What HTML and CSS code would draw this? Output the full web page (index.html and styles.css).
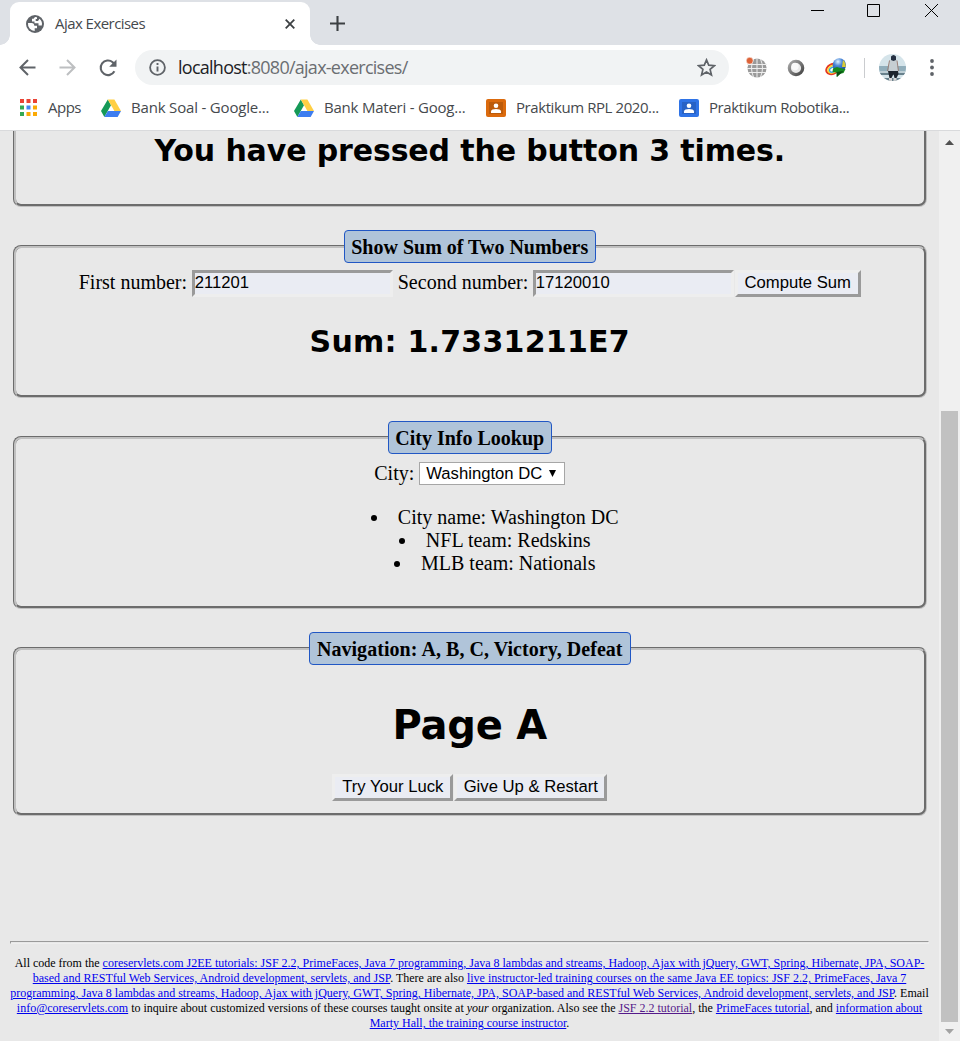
FILE: index.html
```html
<!DOCTYPE html>
<html lang="en">
<head>
<meta charset="utf-8">
<title>Ajax Exercises</title>
<link rel="stylesheet" href="styles.css">
</head>
<body>
<svg class="defs" aria-hidden="true">
  <symbol id="drive" viewBox="0 0 20 18"><path fill="#159957" d="M6.8 0.5 0 12l3.4 6L10 6.3z"/><path fill="#ffcf44" d="M6.8.5h6.6L20 12h-6.6z"/><path fill="#3d7df0" d="M6.8 12H20l-3.4 6H3.4z"/></symbol>
  <symbol id="person" viewBox="0 0 20 18"><path d="M3 3h14v12H3z" fill="#000" opacity=".14"/><circle cx="10" cy="6.800" r="2.300" fill="#fff"/><path fill="#fff" d="M5 14v-1.500C5 10.700 7.500 10 10 10s5 .7 5 2.500V14z"/></symbol>
</svg>
<header class="tabs">
  <div class="tab">
    <svg class="favicon" viewBox="0 0 18 18"><circle cx="9" cy="9" r="9" fill="#5f6368"/><path fill="#fff" d="M2 8h3.500c2 0 2.800 1.200 2.800 2.700H11v2.600H8.700v2.600A7 7 0 0 1 2 8zM9 2 7.600 3.800H6v2.700h2.500v1.700h4v2.300h3.300A7 7 0 0 0 13.500 3.700L12 6H9.700V3.900H11V2.200z"/></svg>
    <span class="tab-title">Ajax Exercises</span>
    <svg class="tab-close" viewBox="0 0 10 10"><path d="m.7.7 8.6 8.6M9.3.7.7 9.3" stroke="#3c4043" stroke-width="1.8"/></svg>
  </div>
  <svg class="new-tab" viewBox="0 0 15 15"><path d="M7.5 0v15M0 7.5h15" stroke="#3c4043" stroke-width="2.1"/></svg>
  <svg class="window-buttons" viewBox="0 0 128 14" fill="none" stroke="#000"><path d="M0 7.5h13M56.500 1.500h12v12h-12zM114 1l13 13M127 1l-13 13"/></svg>
</header>
<div class="toolbar">
  <svg class="back" viewBox="0 0 17 17" fill="none" stroke="#5f6368" stroke-width="2"><path d="M16.500 8.500H1.500M9 1 1.500 8.500 9 16"/></svg>
  <svg class="forward" viewBox="0 0 17 17" fill="none" stroke="#bdbfc1" stroke-width="2"><path d="M.5 8.500h15M8 1l7.500 7.500L8 16"/></svg>
  <svg class="reload" viewBox="0 0 18 18"><path d="M15.400 12.300A7.300 7.300 0 1 1 13.700 3.200L15 4.700" fill="none" stroke="#5f6368" stroke-width="2.100"/><path d="M17.500.5v7.300h-7.300z" fill="#5f6368"/></svg>
  <div class="address">
    <svg class="info" viewBox="0 0 17 17"><circle cx="8.500" cy="8.500" r="7.400" fill="none" stroke="#5f6368" stroke-width="1.800"/><path d="M8.500 7.500v5M8.500 4v2" stroke="#5f6368" stroke-width="1.900"/></svg>
    <span class="url"><b>localhost</b>:8080/ajax-exercises/</span>
    <svg class="star" viewBox="0 0 18 18"><path d="m9 1.800 2.100 5 5.400.5-4.100 3.500 1.300 5.300L9 13.300l-4.700 2.800 1.300-5.300-4.100-3.500 5.400-.5z" fill="none" stroke="#5f6368" stroke-width="1.600"/></svg>
  </div>
  <svg class="ext-globe" viewBox="0 0 21 21"><circle cx="11" cy="11" r="9.600" fill="#9a9a9a"/><path d="M1 7.500h20M1 11.500h20M2 15.500h18M11 1v20M7.500 2Q3.500 11 7.500 20M14.500 2q4 9 0 18" fill="none" stroke="#eee"/><circle cx="3.700" cy="3.700" r="3.400" fill="#dd6338" stroke="#fff" stroke-width=".5"/></svg>
  <svg class="ext-ring" viewBox="0 0 18 18"><defs><linearGradient id="ring" x2="1" y2="1"><stop stop-color="#aaa"/><stop offset="1" stop-color="#444"/></linearGradient></defs><circle cx="9" cy="9" r="6.700" fill="#e9e9e9" stroke="url(#ring)" stroke-width="3.200"/><circle cx="8" cy="7.500" r="3.700" fill="#fafafa"/></svg>
  <svg class="ext-idm" viewBox="0 0 21 19"><defs><radialGradient id="ball" cx=".4" cy=".25" r=".8"><stop stop-color="#dff3ff"/><stop offset=".4" stop-color="#4a86d8"/><stop offset="1" stop-color="#123f94"/></radialGradient></defs><g fill="none"><ellipse cx="7.500" cy="11" rx="6.500" ry="4.800" stroke="#e43a24" stroke-width="2" transform="rotate(-25 7.500 11)"/><ellipse cx="7.800" cy="11.200" rx="5" ry="3.500" stroke="#ffd92b" stroke-width="1.600" transform="rotate(-25 7.800 11.200)"/><ellipse cx="8" cy="11.500" rx="3.700" ry="2.300" stroke="#31a9e0" stroke-width="1.400" transform="rotate(-25 8 11.500)"/></g><circle cx="14.300" cy="7" r="6.700" fill="url(#ball)"/><path d="M18 2q3 3 2.700 7L17 9z" fill="#d8cb35"/><path d="M8 10.500 12 9l3 1 5.500 1-2 4-4 1-3 3 .3-4.500-4.300-.5z" fill="#178a20"/><path d="m11.500 14 7-1-6.500 6z" fill="#0b5013"/></svg>
  <i class="divider"></i>
  <svg class="avatar" viewBox="0 0 27 27"><defs><clipPath id="face"><circle cx="13.500" cy="13.500" r="13.500"/></clipPath></defs><g clip-path="url(#face)"><path fill="#d5e4ea" d="M0 0h27v27H0z"/><path fill="#91aebb" d="M0 12h27v9H0z"/><path fill="#68818c" d="M0 19h27v2H0zM0 24h27v3H0z"/><path fill="#bdced5" d="M0 17h27v2H0z"/><path fill="#c6ced2" d="m10.500 6-1 11.500h9.500L18 6z"/><path d="M10.500 6.500 8.500 17M18 6.500 19.500 17" stroke="#9b8179"/><path d="M12 2.500q2.500-3 5 0V6l-2.500 1L12 6z" fill="#263143"/><path fill="#1d242c" d="M9 17h10l.5 3-2 4h-2l-1-4-2 4h-2z"/><path fill="#d7d5d5" d="M10 24h3v3h-3zM14.500 24h3v3h-3z"/></g></svg>
  <svg class="more" viewBox="0 0 4 17" fill="#5f6368"><circle cx="2" cy="2" r="1.900"/><circle cx="2" cy="8.500" r="1.900"/><circle cx="2" cy="15" r="1.900"/></svg>
</div>
<nav class="bookmarks">
  <svg class="apps" viewBox="0 0 17 17"><path fill="#ea4335" d="M0 0h4v4H0zM6.500 0h4v4h-4zM13 0h4v4h-4z"/><path fill="#34a853" d="M0 6.500h4v4H0zM0 13h4v4H0z"/><path fill="#4285f4" d="M6.500 6.500h4v4h-4z"/><path fill="#fbaa05" d="M13 6.500h4v4h-4zM6.500 13h4v4h-4zM13 13h4v4h-4z"/></svg>
  <span class="bm bm-apps">Apps</span>
  <svg class="bm-icon"><use href="#drive"/></svg><span class="bm bm-soal">Bank Soal - Google...</span>
  <svg class="bm-icon"><use href="#drive"/></svg><span class="bm bm-materi">Bank Materi - Goog...</span>
  <svg class="bm-icon orange"><use href="#person"/></svg><span class="bm bm-rpl">Praktikum RPL 2020...</span>
  <svg class="bm-icon blue"><use href="#person"/></svg><span class="bm bm-robot">Praktikum Robotika...</span>
</nav>
<div class="viewport">
  <main class="page">
    <section class="press"><h2>You have pressed the button 3 times.</h2></section>
    <fieldset class="sum">
      <legend>Show Sum of Two Numbers</legend>
      <div class="form-row">
        <label class="first" for="a">First number:</label><input id="a" value="211201">
        <label class="second" for="b">Second number:</label><input id="b" value="17120010"><button class="compute">Compute Sum</button>
      </div>
      <h2>Sum: 1.7331211E7</h2>
    </fieldset>
    <fieldset class="city">
      <legend>City Info Lookup</legend>
      <div class="city-row"><span>City:</span><div class="select"><span>Washington DC</span><svg viewBox="0 0 7 7"><path d="M0 0h7L3.500 7z"/></svg></div></div>
      <ul><li>City name: Washington DC</li><li>NFL team: Redskins</li><li>MLB team: Nationals</li></ul>
    </fieldset>
    <fieldset class="navigation">
      <legend>Navigation: A, B, C, Victory, Defeat</legend>
      <h1>Page A</h1>
      <div class="actions"><button class="luck">Try Your Luck</button><button class="restart">Give Up &amp; Restart</button></div>
    </fieldset>
    <hr>
    <footer>All code from the <a href="#">coreservlets.com J2EE tutorials: JSF 2.2, PrimeFaces, Java 7 programming, Java 8 lambdas and streams, Hadoop, Ajax with jQuery, GWT, Spring, Hibernate, JPA, SOAP-<br>based and RESTful Web Services, Android development, servlets, and JSP</a>. There are also <a href="#">live instructor-led training courses on the same Java EE topics: JSF 2.2, PrimeFaces, Java 7<br>programming, Java 8 lambdas and streams, Hadoop, Ajax with jQuery, GWT, Spring, Hibernate, JPA, SOAP-based and RESTful Web Services, Android development, servlets, and JSP</a>. Email<br><a href="#">info@coreservlets.com</a> to inquire about customized versions of these courses taught onsite at <em>your</em> organization. Also see the <a class="seen" href="#">JSF 2.2 tutorial</a>, the <a href="#">PrimeFaces tutorial</a>, and <a href="#">information about<br>Marty Hall, the training course instructor</a>.</footer>
  </main>
  <aside class="scrollbar">
    <svg viewBox="0 0 9 5"><path d="M0 5h9L4.500 0z" fill="#505050"/></svg>
    <i class="thumb"></i>
    <svg viewBox="0 0 9 5"><path d="M0 0h9L4.500 5z" fill="#a3a3a3"/></svg>
  </aside>
</div>
</body>
</html>
```
FILE: styles.css
```css
* { box-sizing: border-box; }
body { margin: 0; width: 960px; height: 1041px; overflow: hidden; background: #fff; }
svg { display: block; flex: none; }
.defs { display: none; }
.tabs { height: 45px; background: #dee1e6; display: flex; align-items: flex-start; padding-left: 10px; }
.tab { width: 300px; height: 43px; margin-top: 2px; background: #fff; border-radius: 9px 9px 0 0; display: flex; align-items: center; padding: 0 15px 0 16px; position: relative; }
.tab::before, .tab::after { content: ""; position: absolute; bottom: 0; width: 10px; height: 10px; }
.tab::before { left: -10px; background: radial-gradient(circle at 0 0, #dee1e6 9.5px, #fff 10px); }
.tab::after { right: -10px; background: radial-gradient(circle at 100% 0, #dee1e6 9.5px, #fff 10px); }
.favicon { width: 18px; height: 18px; margin-right: 11px; }
.tab-title { font: 15px "Open Sans", sans-serif; color: #45494d; letter-spacing: -.55px; flex: 1; white-space: nowrap; padding-bottom: 2px; }
.tab-close { width: 10px; height: 10px; }
.new-tab { width: 15px; height: 15px; margin: 16px 0 0 20px; }
.window-buttons { width: 128px; height: 14px; margin: 3px 21px 0 auto; }
.toolbar { height: 45px; display: flex; align-items: center; padding-left: 19px; }
.back { width: 17px; height: 17px; }
.forward { width: 17px; height: 17px; margin-left: 23px; }
.reload { width: 18px; height: 18px; margin-left: 23px; }
.address { width: 594px; height: 35px; margin-left: 18px; border-radius: 18px; background: #f1f3f4; display: flex; align-items: center; padding: 0 13px 0 14px; }
.info { width: 17px; height: 17px; }
.url { flex: 1; margin-left: 12px; font: 18px "Open Sans", sans-serif; letter-spacing: -.74px; color: #6b6e72; white-space: nowrap; padding-bottom: 1px; }
.url b { font-weight: 400; color: #202124; }
.star { width: 19px; height: 19px; }
.ext-globe { width: 21px; height: 21px; margin-left: 17px; }
.ext-ring { width: 18px; height: 18px; margin-left: 20px; }
.ext-idm { width: 21px; height: 19px; margin-left: 20px; }
.divider { width: 1px; height: 20px; background: #cacccf; margin-left: 18px; }
.avatar { width: 27px; height: 27px; margin-left: 14px; }
.more { width: 4px; height: 17px; margin-left: 24px; }
.bookmarks { height: 41px; border-bottom: 1px solid #d9dadc; display: flex; align-items: center; padding: 0 0 5px 20px; }
.apps { width: 17px; height: 17px; margin-right: 11px; }
.bm-icon { width: 20px; height: 18px; margin-right: 10px; }
.orange { background: #db6a0d; border-radius: 2px; }
.blue { background: #2f73e6; border-radius: 2px; }
.bm { font: 15px "Open Sans", sans-serif; letter-spacing: -.5px; color: #45494d; white-space: nowrap; padding-bottom: 2px; }
.bm-apps { width: 53px; }
.bm-soal { width: 163px; letter-spacing: -.18px; }
.bm-materi { width: 162px; letter-spacing: -.22px; }
.bm-rpl { width: 163px; letter-spacing: -.42px; }
.bm-robot { width: 160px; letter-spacing: -.42px; }
.viewport { height: 910px; display: flex; background: #e8e8e8; }
.page { width: 939px; padding: 0 10px; font: 20px "Liberation Serif", serif; color: #000; }
section, fieldset { margin: 0 2.5px 23px 3px; border: 3px groove silver; border-radius: 8px; padding: 0; min-width: 0; text-align: center; }
.press { height: 76px; border-top: 0; border-radius: 0 0 8px 8px; }
.sum { height: 168px; }
.city { height: 188px; }
.navigation { height: 184px; }
legend { height: 33px; line-height: 32px; margin: 0 auto; padding: 0 6.600px; border: 1px solid #2157c4; border-radius: 4px; background: #b0c4d9; font-weight: bold; white-space: nowrap; }
.navigation legend { padding: 0 7px; letter-spacing: .05px; }
h1, h2 { margin: 0; font-family: "DejaVu Sans", sans-serif; font-weight: bold; white-space: nowrap; }
h2 { font-size: 30px; line-height: 38px; letter-spacing: -.13px; }
.press h2 { padding-top: 1px; }
.sum h2 { margin-top: 26px; letter-spacing: .25px; }
.form-row { height: 27px; margin-top: 7px; display: flex; justify-content: center; align-items: stretch; line-height: 24px; white-space: nowrap; }
.first { width: 113px; text-align: left; }
.second { width: 135px; margin-left: 5px; text-align: left; }
input { width: 201px; padding: 0 0 2px; border: 3px solid; border-color: #9a9a9a #eee #eee #9a9a9a; background: #eaecf3; font: 16.67px "Liberation Sans", sans-serif; color: #000; }
button { padding: 0; height: 27px; border: 3px solid; border-color: #eee #9a9a9a #9a9a9a #eee; background: #eaecf3; font: 16.67px "Liberation Sans", sans-serif; white-space: nowrap; color: #000; }
.compute { width: 126px; margin-left: 1px; padding-bottom: 2px; }
.city-row { margin-top: 8px; height: 24px; display: flex; justify-content: center; line-height: 22px; gap: 5px; }
.select { width: 146px; height: 23px; border: 1px solid #a6a6a6; background: #fff; display: flex; align-items: center; padding: 0 8px 0 6px; justify-content: space-between; font: 16.67px "Liberation Sans", sans-serif; }
.select svg { width: 7px; height: 7px; }
ul { margin: 20px 0 0; padding-left: 50px; line-height: 23px; list-style-position: inside; }
h1 { margin-top: 35px; font-size: 40px; line-height: 50px; letter-spacing: -.2px; }
.actions { margin-top: 24px; display: flex; justify-content: center; gap: 1px; }
.actions button { padding-bottom: 1px; }
.luck { width: 121px; }
.restart { width: 153px; }
hr { height: 3px; margin: 125px 0 12px; border: 1px solid; border-color: #9a9a9a #eee #eee #9a9a9a; }
footer { font-size: 12px; line-height: 15px; text-align: center; white-space: nowrap; }
a { color: #0000ee; }
.seen { color: #551a8b; }
.scrollbar { width: 21px; background: #f0f0f0; display: flex; flex-direction: column; align-items: center; padding-top: 9px; }
.scrollbar svg { width: 9px; height: 5px; }
.thumb { width: 17px; height: 611px; margin: 266px 0 7px; background: #c1c1c1; }
```
